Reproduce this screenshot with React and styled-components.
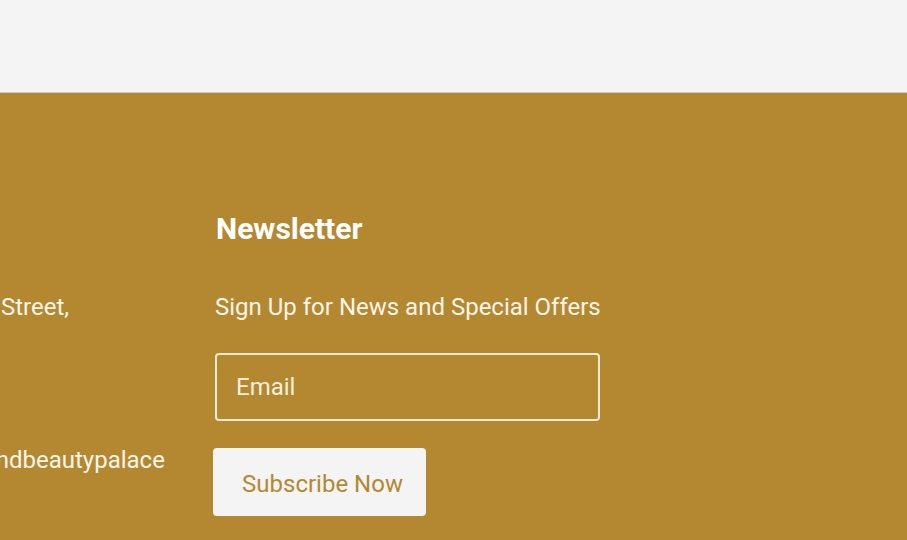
import React from 'react'
import styled, { createGlobalStyle } from 'styled-components'

const GlobalStyle = createGlobalStyle`
  html, body {
    margin: 0;
    padding: 0;
    background: #f4f4f4;
    font-family: Roboto, "Liberation Sans", sans-serif;
  }
  * {
    box-sizing: border-box;
  }
`

const contact = [
  ['1234 Main Street,', 'NY 10001'],
  ['(555) 1230'],
  ['info@nailandbeautypalace'],
]

const App = () => {
  return (
    <Page>
      <GlobalStyle />
      <TopBar />
      <Footer>
        <Columns>
          <ContactColumn>
            <Heading>Visit Us</Heading>
            {contact.map((lines, i) => (
              <ContactItem key={i}>
                {lines.map((line, j) => (
                  <Line key={j}>{line}</Line>
                ))}
              </ContactItem>
            ))}
          </ContactColumn>
          <NewsletterColumn>
            <Heading>Newsletter</Heading>
            <Text>Sign Up for News and Special Offers</Text>
            <Form onSubmit={e => e.preventDefault()}>
              <EmailInput type="email" placeholder="Email" />
              <SubscribeBtn type="submit">Subscribe Now</SubscribeBtn>
            </Form>
          </NewsletterColumn>
        </Columns>
      </Footer>
    </Page>
  )
}

export default App

const Page = styled.div`
  display: flex;
  flex-direction: column;
  height: 540px;
  overflow: hidden;
`
const TopBar = styled.div`
  height: 93px;
  flex-shrink: 0;
  background: #f4f4f4;
  border-bottom: 1px solid #cbcbc6;
`
const Footer = styled.footer`
  flex: 1;
  background: #b38831;
  padding-top: 120px;
  overflow: hidden;
`
const Columns = styled.div`
  display: flex;
  gap: 50px;
  margin-left: -118px;
`
const Heading = styled.h3`
  margin: 0 0 48px;
  padding-left: 1px;
  font-size: 30px;
  line-height: 31px;
  font-weight: 700;
  color: #ffffff;
  white-space: nowrap;
`
const ContactColumn = styled.div`
  width: 283px;
  flex-shrink: 0;
  display: flex;
  flex-direction: column;
  gap: 30px;
  // heading margin is counted in gap below
  & > ${Heading} {
    margin-bottom: 18px;
  }
`
const ContactItem = styled.div`
  display: flex;
  flex-direction: column;
`
const Line = styled.span`
  font-size: 24px;
  line-height: 31px;
  color: #fbf5ea;
  white-space: nowrap;
`
const NewsletterColumn = styled.div`
  width: 385px;
  flex-shrink: 0;
  display: flex;
  flex-direction: column;
`
const Text = styled.p`
  margin: 0 0 30px;
  font-size: 24px;
  line-height: 31px;
  color: #fbf5ea;
  white-space: nowrap;
`
const Form = styled.form`
  display: flex;
  flex-direction: column;
  align-items: flex-start;
  gap: 27px;
`
const EmailInput = styled.input`
  width: 385px;
  height: 68px;
  padding: 0 19px;
  border: 2px solid rgba(252, 244, 228, 0.9);
  border-radius: 4px;
  background: transparent;
  font-family: inherit;
  font-size: 24px;
  color: #fbf5ea;
  outline: none;

  &::placeholder {
    color: #f8efdc;
  }
`
const SubscribeBtn = styled.button`
  width: 213px;
  height: 68px;
  margin-left: -2px;
  padding: 4px 0 0 6px;
  border: none;
  border-radius: 4px;
  background: #f4f4f4;
  font-family: inherit;
  font-size: 24px;
  color: #b38831;
  cursor: pointer;
`
